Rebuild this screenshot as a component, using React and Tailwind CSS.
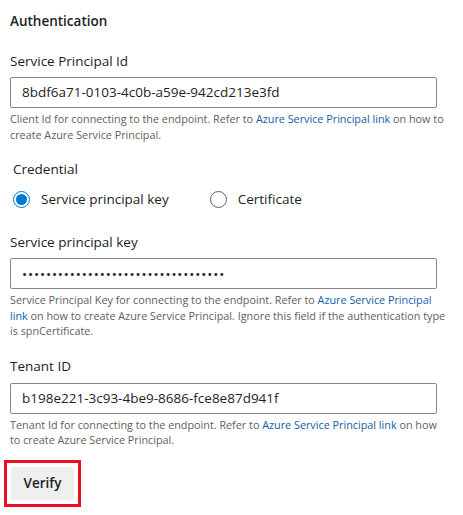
import { useState } from 'react'

const font = { fontFamily: '"Segoe UI", "Open Sans", "Noto Sans", sans-serif' }

function Help({ children, className = '' }) {
  return <p className={`mt-[3px] text-[10.8px] leading-[15.5px] text-[#605e5c] ${className}`}>{children}</p>
}

function Link({ children }) {
  return <span className="text-[#0f5da8]">{children}</span>
}

function Field({ label, value, className }) {
  return (
    <div className={className}>
      <label className="block text-[13.5px] leading-[20px] text-[#201f1e]">{label}</label>
      <div className="mt-[6px] flex h-[31px] w-[427px] items-center border border-[#8a8886] rounded-[2px] px-[11px] text-[13.5px] text-[#201f1e]">
        {value}
      </div>
    </div>
  )
}

function Radio({ checked, label, onClick }) {
  return (
    <button onClick={onClick} className="flex items-center gap-[11px] text-[13.5px] text-[#201f1e]">
      <span className={`flex h-[17px] w-[17px] items-center justify-center rounded-full border ${checked ? 'border-[#0078d4]' : 'border-[#605e5c]'}`}>
        {checked && <span className="h-[11px] w-[11px] rounded-full bg-[#0078d4]" />}
      </span>
      {label}
    </button>
  )
}

export default function App() {
  const [cred, setCred] = useState('key')
  return (
    <div className="h-[515px] w-[463px] bg-white pl-[10px] pt-[10px]" style={font}>
      <h2 className="text-[13.5px] font-semibold leading-[22px] text-[#201f1e]">Authentication</h2>

      <Field className="mt-[19px]" label="Service Principal Id" value="8bdf6a71-0103-4c0b-a59e-942cd213e3fd" />
      <Help className="pr-[14px]">
        Client Id for connecting to the endpoint. Refer to <Link>Azure Service Principal link</Link> on how to create Azure Service Principal.
      </Help>

      <div className="mt-[17px] pl-[3px]">
        <p className="text-[13.5px] leading-[20px] text-[#201f1e]">Credential</p>
        <div className="mt-[10px] flex items-center gap-[41px]">
          <Radio checked={cred === 'key'} label="Service principal key" onClick={() => setCred('key')} />
          <Radio checked={cred === 'cert'} label="Certificate" onClick={() => setCred('cert')} />
        </div>
      </div>

      <div className="mt-[23px]">
        <label className="block text-[13.5px] leading-[20px] text-[#201f1e]">Service principal key</label>
        <div className="mt-[6px] flex h-[31px] w-[427px] items-center border border-[#8a8886] rounded-[2px] px-[11px] text-[13.5px] tracking-[0.9px] text-[#201f1e]">
          ••••••••••••••••••••••••••••••••••
        </div>
      </div>
      <Help className="pr-[14px]">
        Service Principal Key for connecting to the endpoint. Refer to <Link>Azure Service Principal link</Link> on how to create Azure Service Principal. Ignore this field if the authentication type is spnCertificate.
      </Help>

      <div className="mt-[17px]">
        <label className="block text-[13.5px] leading-[20px] text-[#201f1e]">Tenant ID</label>
        <div className="mt-[7px] flex h-[31px] w-[427px] items-center border border-[#8a8886] rounded-[2px] px-[11px] text-[13.5px] text-[#201f1e]">
          b198e221-3c93-4be9-8686-fce8e87d941f
        </div>
      </div>
      <Help className="pr-[22px]">
        Tenant Id for connecting to the endpoint. Refer to <Link>Azure Service Principal link</Link> on how to create Azure Service Principal.
      </Help>

      <div className="mt-[12px] -ml-[6px] inline-block border-[3px] border-[#e81123] p-[4px]">
        <button className="h-[33px] w-[63px] rounded-[2px] bg-[#efefef] text-[13.5px] font-semibold text-[#201f1e]">Verify</button>
      </div>
    </div>
  )
}
